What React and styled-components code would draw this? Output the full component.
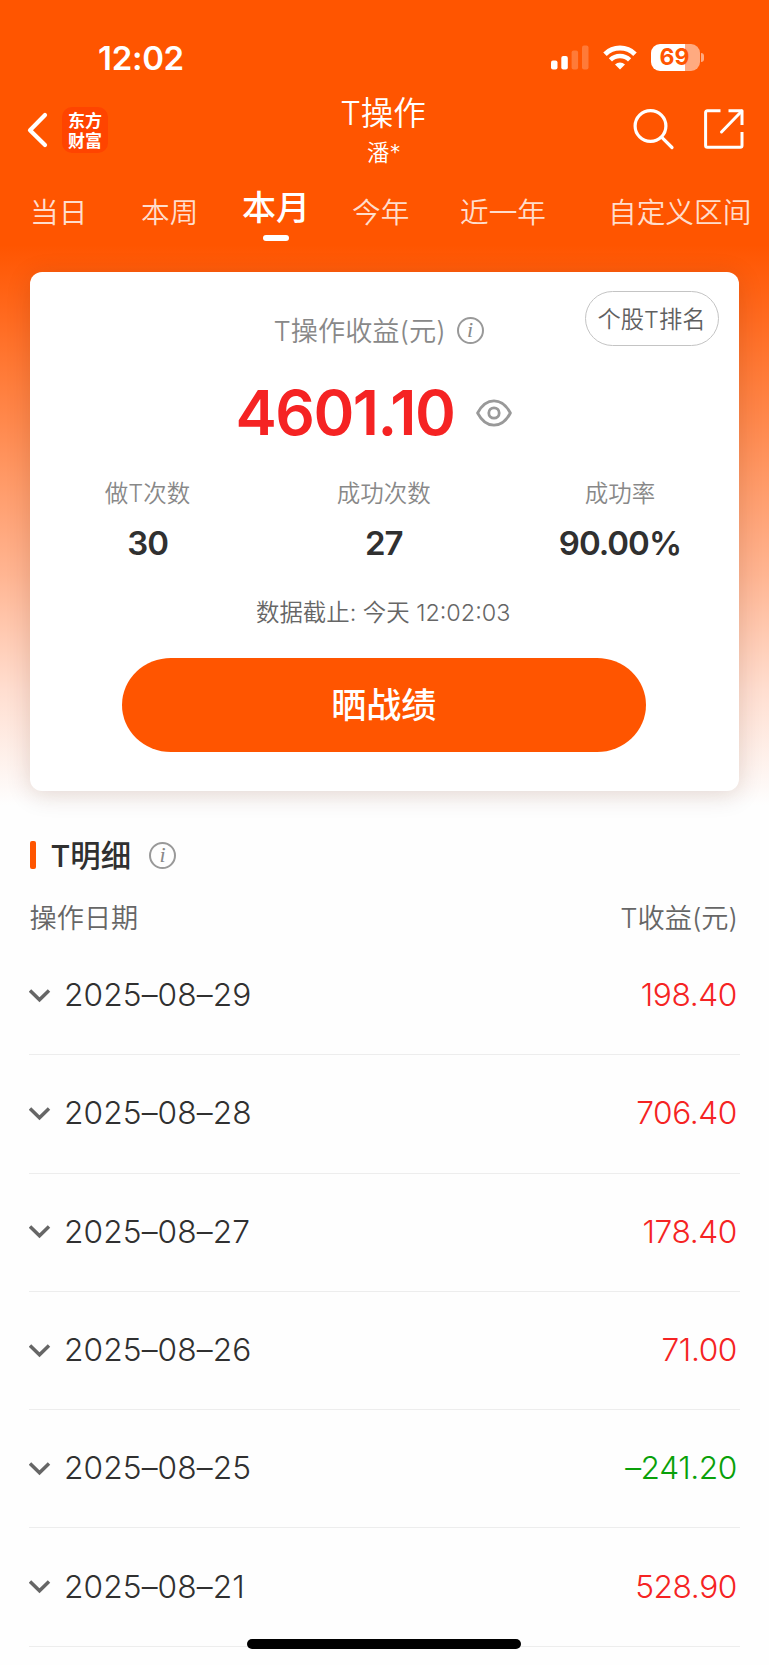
import React from "react";
import styled, { createGlobalStyle } from "styled-components";

const GlobalStyle = createGlobalStyle`
  * {
    box-sizing: border-box;
  }

  body {
    margin: 0;
    background-color: #fefefe;
    font-family: Inter, "Noto Sans CJK SC", sans-serif;
    color: #303030;
  }

  svg {
    display: block;
    flex-shrink: 0;
  }
`;

const Page = styled.div`
  position: relative;
  width: 769px;
  height: 1665px;
  overflow: hidden;
  background: linear-gradient(
    180deg,
    #ff5500 0,
    #ff5500 245px,
    #ff8b50 430px,
    #ffb592 575px,
    #ffded0 690px,
    #fefefe 805px
  );
`;

const StatusBar = styled.div`
  display: flex;
  align-items: center;
  height: 70px;
  margin-top: 22px;
  padding: 0 65px 0 98px;
`;

const Time = styled.div`
  flex: 1;
  padding-top: 1px;
  color: white;
  font-size: 33px;
  font-weight: 600;
  line-height: 70px;
  letter-spacing: -0.3px;
`;

const StatusIcons = styled.div`
  display: flex;
  align-items: center;
  gap: 14px;
`;

const Battery = styled.div`
  display: flex;
  align-items: center;
  justify-content: center;
  width: 49px;
  height: 27px;
  padding-right: 2px;
  border-radius: 9px;
  background: linear-gradient(90deg, white 70%, #ffaa80 70%);
  color: #ff5500;
  font-size: 23px;
  font-weight: 700;
`;

const BatteryBox = styled.div`
  display: flex;
  align-items: center;
  gap: 1px;
`;

const BatteryTip = styled.div`
  width: 3px;
  height: 9px;
  border-radius: 0 3px 3px 0;
  background-color: #ffaa80;
`;

const NavBar = styled.div`
  display: grid;
  grid-template-columns: 200px 1fr 200px;
  height: 80px;
`;

const NavLeft = styled.div`
  display: flex;
  align-items: center;
  gap: 14px;
  padding: 0 0 5px 27px;
`;

const Logo = styled.div`
  display: flex;
  flex-direction: column;
  align-items: center;
  width: 46px;
  height: 46px;
  padding-top: 5px;
  border-radius: 10px;
  background-color: #ff4400;
  color: white;
  font-family: "Liberation Sans", "Noto Sans CJK SC", sans-serif;
  font-size: 17px;
  font-weight: 700;
`;

const LogoLine = styled.span`
  height: 20px;
  line-height: 20px;
`;

const NavTitle = styled.div`
  padding-right: 3px;
  color: white;
  text-align: center;
`;

const Title = styled.div`
  height: 43px;
  font-size: 32.5px;
  font-weight: 350;
  line-height: 43px;
`;

const SubTitle = styled.div`
  padding-left: 2px;
  font-size: 22.5px;
  font-weight: 350;
  line-height: 35px;
`;

const NavRight = styled.div`
  display: flex;
  align-items: center;
  justify-content: flex-end;
  gap: 29px;
  padding: 0 25px 6px 0;
`;

const Tabs = styled.div`
  display: grid;
  grid-template-columns: 111px 100px 111px 108px 148px 160px;
  height: 99px;
  padding-left: 30px;
`;

const Tab = styled.div`
  padding-top: 20px;
  color: #ffddcc;
  font-size: 28.7px;
  font-weight: 350;
  line-height: 41px;
  white-space: nowrap;
`;

const ActiveTab = styled.div`
  width: 70px;
  padding-top: 14px;
  color: white;
  font-size: 34px;
  font-weight: 500;
  line-height: 44px;
  text-align: center;
  white-space: nowrap;

  &::after {
    content: "";
    display: block;
    width: 26px;
    height: 6px;
    margin: 5px auto 0;
    border-radius: 3px;
    background-color: white;
  }
`;

const Card = styled.div`
  position: relative;
  width: 709.5px;
  height: 519.5px;
  margin: 0.5px 0 0 29.5px;
  border-radius: 12px;
  background-color: white;
  box-shadow: 0 4px 24px rgba(80, 30, 10, 0.16);
`;

const RankBtn = styled.button`
  position: absolute;
  top: 19.5px;
  right: 20px;
  width: 134px;
  height: 55px;
  padding: 0 1px 1px 0;
  border: 1px solid #c4c4c4;
  border-radius: 28px;
  background-color: white;
  color: #606060;
  font-family: inherit;
  font-size: 23.3px;
  font-weight: 350;
`;

const ProfitLabel = styled.div`
  display: flex;
  align-items: center;
  height: 40px;
  padding-left: 244px;
  gap: 11px;
  color: #888888;
  font-size: 27.2px;
  font-weight: 350;
`;

const LabelText = styled.span`
  margin-top: -3px;
`;

const CardTop = styled.div`
  padding-top: 39px;
`;

const InfoIcon = styled.span`
  display: flex;
  justify-content: center;
  width: 27px;
  height: 27px;
  border: 2px solid #999999;
  border-radius: 50%;
  color: #888888;
  font-family: "Liberation Serif", serif;
  font-size: 22px;
  font-style: italic;
  font-weight: 400;
  line-height: 22px;
`;

const Profit = styled.div`
  display: flex;
  align-items: center;
  gap: 22px;
  height: 80px;
  margin-top: 22px;
  padding-left: 206px;
  color: #f52323;
  font-size: 62px;
  font-weight: 600;
  letter-spacing: -1.5px;
`;

const Stats = styled.div`
  display: grid;
  grid-template-columns: repeat(3, 1fr);
  margin: 23px 1px 0 0;
  text-align: center;
`;

const StatLabel = styled.div`
  color: #888888;
  font-size: 23.5px;
  font-weight: 350;
  line-height: 36px;
`;

const StatValue = styled.div`
  margin-top: 9px;
  color: #303030;
  font-size: 33px;
  font-weight: 600;
  line-height: 44px;
  letter-spacing: -1px;
`;

const Deadline = styled.div`
  margin: 30px 2px 0 0;
  color: #666666;
  font-size: 23.4px;
  font-weight: 350;
  line-height: 36px;
  text-align: center;
`;

const ShareBtn = styled.button`
  display: block;
  width: 524px;
  height: 94px;
  margin: 27px auto 0;
  padding: 0 1px 4px 0;
  border: none;
  border-radius: 49px / 47px;
  background-color: #ff5500;
  color: white;
  font-family: inherit;
  font-size: 35px;
  font-weight: 500;
`;

const SectionTitle = styled.div`
  display: flex;
  align-items: center;
  height: 44px;
  margin: 42px 0 0 29.5px;
  font-size: 30.4px;
  font-weight: 500;
`;

const Mark = styled.span`
  width: 6px;
  height: 28px;
  margin-right: 15px;
  border-radius: 2px;
  background-color: #ff5500;
`;

const TitleText = styled.span`
  margin: -3px 18px 0 0;
`;

const ListHead = styled.div`
  display: flex;
  justify-content: space-between;
  margin: 21px 31px 0 29.5px;
  color: #666666;
  font-size: 27.2px;
  font-weight: 350;
  line-height: 42px;
`;

const List = styled.div`
  margin: -3px 29px 0 29px;
`;

const Row = styled.div`
  display: flex;
  align-items: center;
  height: 118.3px;
  padding: 0 3px 0 0;
  border-bottom: 1px solid #ededed;
  font-size: 31.7px;
  font-weight: 350;
`;

const RowDate = styled.div`
  flex: 1;
  padding: 0 0 2px 13px;
  letter-spacing: 0.1px;
`;

const Amount = styled.div`
  padding-bottom: 2px;
  color: ${(props) => (props.$loss ? "#09a009" : "#f52323")};
  letter-spacing: -0.4px;
`;

const HomeBar = styled.div`
  position: absolute;
  left: 247px;
  bottom: 16px;
  width: 274px;
  height: 10px;
  border-radius: 5px;
  background-color: black;
`;

const stats = [
  { label: "做T次数", value: "30" },
  { label: "成功次数", value: "27" },
  { label: "成功率", value: "90.00%" },
];

const rows = [
  { date: "2025–08–29", amount: "198.40" },
  { date: "2025–08–28", amount: "706.40" },
  { date: "2025–08–27", amount: "178.40" },
  { date: "2025–08–26", amount: "71.00" },
  { date: "2025–08–25", amount: "–241.20" },
  { date: "2025–08–21", amount: "528.90" },
];

function SignalIcon() {
  return (
    <svg width="38" height="25" viewBox="0 0 38 25" fill="white">
      <rect x="0" y="15.5" width="6.5" height="9" rx="2" />
      <rect x="10.3" y="11" width="6.5" height="13.5" rx="2" />
      <rect x="20.6" y="5.5" width="6.5" height="19" rx="2" opacity="0.22" />
      <rect x="31" y="0.5" width="6.5" height="24" rx="2" opacity="0.22" />
    </svg>
  );
}

function WifiIcon() {
  return (
    <svg width="34" height="25" viewBox="0 0 34 25" fill="none" stroke="white">
      <path d="M2 9.2 A21.5 21.5 0 0 1 32 9.2" strokeWidth="5" />
      <path d="M7.4 14.9 A13.8 13.8 0 0 1 26.6 14.9" strokeWidth="4.6" />
      <path d="M17 24.5 L12 19.6 A7.2 7.2 0 0 1 22 19.6 Z" fill="white" stroke="none" />
    </svg>
  );
}

function ChevronDown() {
  return (
    <svg width="22" height="14" viewBox="0 0 22 14" fill="none" stroke="#666666" strokeWidth="3.5">
      <path d="M1 1.5 L10.5 10.8 L20 1.5" />
    </svg>
  );
}

function App() {
  return (
    <>
      <GlobalStyle />
      <Page>
        <StatusBar>
          <Time>12:02</Time>
          <StatusIcons>
            <SignalIcon />
            <WifiIcon />
            <BatteryBox>
              <Battery>69</Battery>
              <BatteryTip />
            </BatteryBox>
          </StatusIcons>
        </StatusBar>

        <NavBar>
          <NavLeft>
            <svg width="21" height="36" viewBox="0 0 21 36" fill="none" stroke="white" strokeWidth="4.2" strokeLinecap="round" strokeLinejoin="round">
              <path d="M18 3 L3 18.3 L18 33" />
            </svg>
            <Logo>
              <LogoLine>东方</LogoLine>
              <LogoLine>财富</LogoLine>
            </Logo>
          </NavLeft>
          <NavTitle>
            <Title>T操作</Title>
            <SubTitle>潘*</SubTitle>
          </NavTitle>
          <NavRight>
            <svg width="42" height="42" viewBox="0 0 42 42" fill="none" stroke="white" strokeWidth="3.2" strokeLinecap="round">
              <circle cx="17.5" cy="18" r="15.4" />
              <path d="M28.8 29.3 L39 39.5" />
            </svg>
            <svg width="40" height="40" viewBox="0 0 40 40" fill="none" stroke="white" strokeWidth="3" strokeLinejoin="round">
              <path d="M16.5 1.8 H3.4 Q1.6 1.8 1.6 3.6 V36.4 Q1.6 38.2 3.4 38.2 H36.2 Q38 38.2 38 36.4 V23" />
              <path d="M24.5 1.8 H38 V16" />
              <path d="M37.6 2.2 L17.5 23" strokeLinecap="round" />
            </svg>
          </NavRight>
        </NavBar>

        <Tabs>
          <Tab>当日</Tab>
          <Tab>本周</Tab>
          <ActiveTab>本月</ActiveTab>
          <Tab>今年</Tab>
          <Tab>近一年</Tab>
          <Tab>自定义区间</Tab>
        </Tabs>

        <Card>
          <RankBtn>个股T排名</RankBtn>
          <CardTop>
            <ProfitLabel>
              <LabelText>T操作收益(元)</LabelText>
              <InfoIcon>i</InfoIcon>
            </ProfitLabel>
          </CardTop>
          <Profit>
            4601.10
            <svg width="36" height="28" viewBox="0 0 36 28" fill="none" stroke="#999999" strokeWidth="2.8">
              <path d="M1.6 14 C5.5 6.5 11 1.8 18 1.8 S30.5 6.5 34.4 14 C30.5 21.5 25 26.2 18 26.2 S5.5 21.5 1.6 14 Z" strokeLinejoin="round" />
              <circle cx="18" cy="14" r="5.2" />
            </svg>
          </Profit>
          <Stats>
            {stats.map((item) => (
              <div key={item.label}>
                <StatLabel>{item.label}</StatLabel>
                <StatValue>{item.value}</StatValue>
              </div>
            ))}
          </Stats>
          <Deadline>数据截止: 今天 12:02:03</Deadline>
          <ShareBtn>晒战绩</ShareBtn>
        </Card>

        <SectionTitle>
          <Mark />
          <TitleText>T明细</TitleText>
          <InfoIcon>i</InfoIcon>
        </SectionTitle>

        <ListHead>
          <span>操作日期</span>
          <span>T收益(元)</span>
        </ListHead>

        <List>
          {rows.map((row) => (
            <Row key={row.date}>
              <ChevronDown />
              <RowDate>{row.date}</RowDate>
              <Amount $loss={row.amount.startsWith("–")}>{row.amount}</Amount>
            </Row>
          ))}
        </List>

        <HomeBar />
      </Page>
    </>
  );
}

export default App;
